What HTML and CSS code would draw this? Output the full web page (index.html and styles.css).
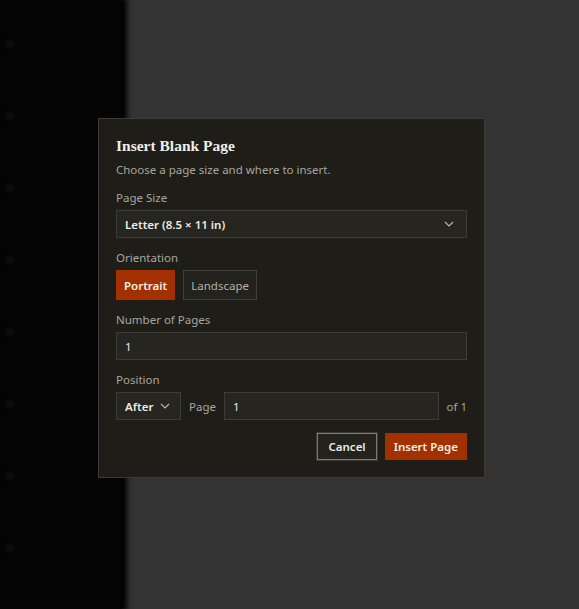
FILE: index.html
```html
<!DOCTYPE html>
<html>
<head>
<meta charset="utf-8">
<link rel="stylesheet" href="styles.css">
</head>
<body>
<div class="app">
  <aside class="sidebar">
    <span class="dot"></span><span class="dot"></span><span class="dot"></span><span class="dot"></span>
    <span class="dot"></span><span class="dot"></span><span class="dot"></span><span class="dot"></span>
  </aside>
  <main class="canvas"></main>
</div>
<div class="overlay">
  <div class="dialog">
    <h1 class="title">Insert Blank Page</h1>
    <p class="subtitle">Choose a page size and where to insert.</p>

    <div class="field">
      <div class="label">Page Size</div>
      <div class="select wide">
        <span>Letter (8.5 × 11 in)</span>
        <svg class="chev" width="10" height="6" viewBox="0 0 10 6"><path d="M1 1l4 4 4-4" fill="none" stroke="#b8b6ae" stroke-width="1.2"/></svg>
      </div>
    </div>

    <div class="field">
      <div class="label">Orientation</div>
      <div class="seg">
        <button class="btn primary">Portrait</button>
        <button class="btn ghost">Landscape</button>
      </div>
    </div>

    <div class="field">
      <div class="label">Number of Pages</div>
      <div class="input">1</div>
    </div>

    <div class="field">
      <div class="label">Position</div>
      <div class="posrow">
        <div class="select small">
          <span>After</span>
          <svg class="chev" width="10" height="6" viewBox="0 0 10 6"><path d="M1 1l4 4 4-4" fill="none" stroke="#b8b6ae" stroke-width="1.2"/></svg>
        </div>
        <span class="muted">Page</span>
        <div class="input grow">1</div>
        <span class="muted">of 1</span>
      </div>
    </div>

    <div class="actions">
      <button class="btn cancel">Cancel</button>
      <button class="btn primary">Insert Page</button>
    </div>
  </div>
</div>
</body>
</html>
```
FILE: styles.css
```css
html, body {
  margin: 0;
  padding: 0;
  height: 100%;
  background: #333333;
  font-family: "Noto Sans", Lato, sans-serif;
}
.app {
  display: flex;
  height: 609px;
}
.sidebar {
  position: relative;
  z-index: 1;
  width: 122px;
  background: #040404;
  box-shadow: 3px 0 5px 2px #020202;
  display: flex;
  flex-direction: column;
  padding-top: 40px;
  gap: 64px;
}
.dot {
  display: block;
  width: 8px;
  height: 8px;
  margin-left: 6px;
  border-radius: 50%;
  background: #111;
  filter: blur(2px);
}
.canvas {
  flex: 1;
  background: #333333;
}
.overlay {
  position: absolute;
  left: 0;
  top: 0;
  width: 579px;
  height: 609px;
  z-index: 2;
}
.dialog {
  position: absolute;
  left: 98px;
  top: 118px;
  width: 351px;
  padding: 17px 17px 17px 17px;
  background: #1e1d18;
  border: 1px solid #3b3a34;
  color: #e6e4de;
}
.title {
  margin: 0;
  font-family: "Liberation Serif", "DejaVu Serif", serif;
  font-weight: bold;
  font-size: 15.5px;
  line-height: 20px;
  color: #f0eee8;
}
.subtitle {
  margin: 5px 0 0 0;
  font-size: 11.5px;
  line-height: 17px;
  color: #a9a69e;
}
.field {
  margin-top: 11px;
}
.label {
  font-size: 11.5px;
  line-height: 17px;
  color: #a9a69e;
  margin-bottom: 4px;
}
.select, .input {
  box-sizing: border-box;
  height: 28px;
  background: #26251f;
  border: 1px solid #3d3c36;
  display: flex;
  align-items: center;
  font-size: 11.5px;
  color: #ecebe6;
}
.select {
  justify-content: space-between;
  padding: 0 12px 0 8px;
  font-weight: 600;
}
.input {
  padding: 0 8px;
}
.seg {
  display: flex;
  gap: 8px;
}
.btn {
  font-family: "Noto Sans", Lato, sans-serif;
  font-size: 11.5px;
  height: 30px;
  padding: 0 7px;
  border: 1px solid transparent;
  background: transparent;
  color: #ecebe6;
  cursor: pointer;
}
.btn.primary {
  background: #a33000;
  color: #f4efe8;
  font-weight: 600;
  border-color: #a33000;
}
.btn.ghost {
  background: #23221d;
  border-color: #414039;
  color: #b4b1a9;
}
.posrow {
  display: flex;
  align-items: center;
  gap: 8px;
}
.select.small {
  width: 65px;
  padding: 0 10px 0 8px;
}
.input.grow {
  flex: 1;
}
.muted {
  font-size: 11.5px;
  color: #a9a69e;
}
.actions {
  display: flex;
  justify-content: flex-end;
  gap: 8px;
  margin-top: 12px;
}
.btn.cancel {
  height: 27px;
  margin-top: 1px;
  padding: 0 10px;
  background: #23221d;
  border: 1px solid #7d7c6c;
  outline: 1px solid #3a3a33;
  color: #ecebe6;
  font-weight: 600;
}
.actions .btn.primary {
  height: 27px;
  margin-top: 1px;
  padding: 0 8px;
}
```
